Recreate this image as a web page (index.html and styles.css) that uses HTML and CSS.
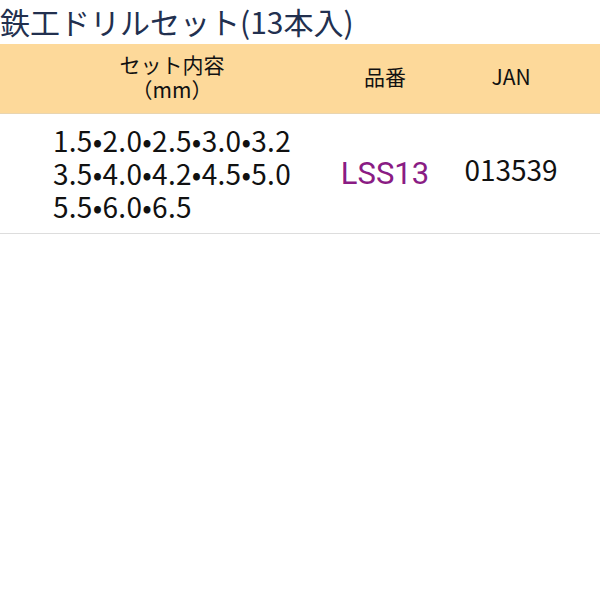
FILE: index.html
```html
<!DOCTYPE html>
<html lang="ja">
<head>
    <meta charset="UTF-8">
    <meta name="viewport" content="width=device-width, initial-scale=1.0">
    <title>鉄工ドリルセット(13本入)</title>
    <link rel="stylesheet" href="styles.css">
</head>
<body>
    <h1 class="title">鉄工ドリルセット(13本入)</h1>

    <div class="spec-table">
        <div class="spec-head">
            <div class="cell">セット内容<br>（mm）</div>
            <div class="cell">品番</div>
            <div class="cell">JAN</div>
        </div>
        <div class="spec-row">
            <div class="cell">
                <div class="sizes">1.5•2.0•2.5•3.0•3.2<br>3.5•4.0•4.2•4.5•5.0<br>5.5•6.0•6.5</div>
            </div>
            <div class="cell code">LSS13</div>
            <div class="cell jan">013539</div>
        </div>
    </div>
</body>
</html>
```

FILE: styles.css
```css
body {
    margin: 0;
    padding: 0;
    background: #fff;
    font-family: "Noto Sans CJK JP", sans-serif;
    color: #111;
}

.title {
    margin: 0;
    height: 44px;
    font-size: 30px;
    font-weight: normal;
    line-height: 42px;
    color: #22304f;
}

.spec-table {
    width: 100%;
}

.spec-head,
.spec-row {
    display: grid;
    grid-template-columns: 336px 90px 1fr;
    padding: 0 8px 0 4px;
    align-items: center;
    text-align: center;
}

.spec-head {
    background: #fdd99a;
    height: 69px;
    font-size: 21px;
    line-height: 25px;
    border-bottom: 1px solid #e9d5b0;
}

.spec-head .cell {
    margin-top: -4px;
}

.spec-row {
    height: 119px;
    border-bottom: 1px solid #ddd;
}

.sizes {
    display: inline-block;
    text-align: left;
    font-size: 28px;
    line-height: 33px;
    letter-spacing: 0.3px;
}

.code {
    font-family: Roboto, sans-serif;
    font-size: 31px;
    color: #8a1c84;
}

.jan {
    font-size: 28px;
    margin-top: -10px;
}
```
